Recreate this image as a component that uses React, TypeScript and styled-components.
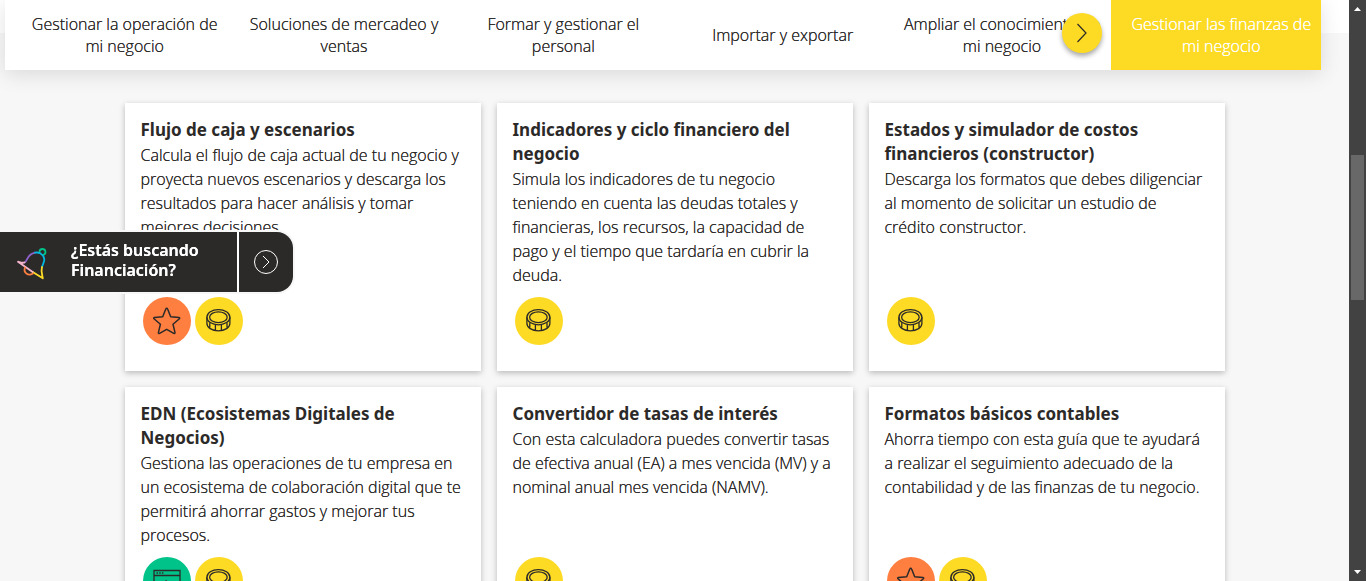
import React from 'react';
import styled, { createGlobalStyle } from 'styled-components';

const GlobalStyle = createGlobalStyle`
  *, *::before, *::after { box-sizing: border-box; }
  body {
    margin: 0;
    background: #f7f7f7;
    color: #2c2a29;
    font-family: 'Open Sans', 'Liberation Sans', sans-serif;
    font-size: 16px;
    font-weight: 300;
    overflow: hidden;
  }
  h2, p, ul { margin: 0; padding: 0; }
`;

const Page = styled.div`
  display: flex;
  height: 100vh;
`;

const Main = styled.main`
  flex: 1;
  min-width: 0;
  overflow: hidden;
  background: linear-gradient(#fff 33px, #f7f7f7 33px);
`;

const TabBar = styled.nav`
  position: relative;
  margin: 0 28px 0 5px;
  background: #fff;
  box-shadow: 0 4px 20px rgba(0, 0, 0, 0.12);
`;

const TabViewport = styled.div`
  overflow: hidden;
`;

const TabTrack = styled.div`
  display: grid;
  grid-template-columns: repeat(6, 1fr);
  width: 100%;
  height: 70px;
  margin-left: 9px;
`;

const Tab = styled.a<{ $active?: boolean }>`
  display: flex;
  align-items: center;
  justify-content: center;
  padding: 0 9px 0 11px;
  background: ${p => (p.$active ? '#fdda24' : 'transparent')};
  color: ${p => (p.$active ? '#fff' : '#2c2a29')};
  line-height: 22px;
  text-align: center;
  text-decoration: none;
  text-shadow: 0 0 0 currentColor;
`;

const NextButton = styled.button`
  position: absolute;
  top: 13px;
  right: 219px;
  display: grid;
  place-items: center;
  width: 40px;
  height: 40px;
  padding: 0;
  border: 0;
  border-radius: 50%;
  background: #fdda24;
  box-shadow: 0 3px 5px rgba(0, 0, 0, 0.35);
`;

const CardGrid = styled.div`
  display: grid;
  grid-template-columns: repeat(3, 1fr);
  gap: 16px;
  max-width: 1100px;
  margin: 33px auto 0;
`;

const Card = styled.article`
  display: flex;
  flex-direction: column;
  padding: 15px 16px 26px;
  background: #fff;
  box-shadow: 0 2px 6px rgba(0, 0, 0, 0.25);
`;

const CardTitle = styled.h2`
  margin-bottom: 1px;
  font-family: 'Noto Sans', 'Open Sans', sans-serif;
  font-size: 17px;
  font-weight: 700;
  line-height: 24px;
`;

const CardText = styled.p`
  line-height: 24px;
  text-shadow: 0 0 0 currentColor;
`;

const Badges = styled.ul`
  display: flex;
  gap: 4px;
  margin-top: auto;
  padding: 10px 2px 0;
  list-style: none;
`;

const badgeColors = { star: '#ff7f41', coin: '#fdda24', web: '#00c389' };
type BadgeKind = keyof typeof badgeColors;

const Badge = styled.li<{ $kind: BadgeKind }>`
  display: grid;
  place-items: center;
  width: 48px;
  height: 48px;
  border-radius: 50%;
  background: ${p => badgeColors[p.$kind]};
`;

const FloatingOffer = styled.aside`
  position: fixed;
  top: 232px;
  left: 0;
  display: flex;
  height: 60px;
  border-radius: 0 16px 16px 0;
  background: #2c2a29;
  box-shadow: 0 0 0 2px #f7f7f7;
`;

const OfferLink = styled.a`
  display: flex;
  align-items: center;
  gap: 22px;
  width: 239px;
  padding-left: 16px;
  border-right: 2px solid #fff;
  color: #fff;
  font-family: 'Noto Sans', 'Open Sans', sans-serif;
  font-size: 16px;
  font-weight: 600;
  line-height: 20px;
  text-decoration: none;
  text-shadow: 0 0 0 currentColor;
`;

const OfferText = styled.span`
  padding-bottom: 4px;
`;

const OfferToggle = styled.button`
  display: grid;
  place-items: center;
  width: 54px;
  padding: 0;
  border: 0;
  background: transparent;
`;

const ScrollRail = styled.div`
  display: flex;
  flex-direction: column;
  align-items: center;
  justify-content: space-between;
  width: 17px;
  padding: 7px 0;
  background: #424242;
`;

const ScrollThumb = styled.div`
  width: 13px;
  height: 145px;
  margin: 144px 0 auto;
  background: #686868;
`;

const StarIcon = () => (
  <svg width="28" height="28" viewBox="0 0 28 28" fill="none" stroke="#2c2a29" strokeWidth="1.5" strokeLinejoin="round" aria-hidden="true">
    <path d="M13.700 1.200Q14.300 1.200 14.600 2L17.700 9.700L26 10.400Q27.200 10.800 26.400 11.700L20 17.300L22 25.600Q22 27 20.800 26.400L13.700 22.300L6.600 26.400Q5.400 27 5.400 25.600L7.400 17.300L1 11.700Q.2 10.800 1.400 10.400L9.700 9.700L12.800 2Q13.100 1.200 13.700 1.200z" />
  </svg>
);

const CoinIcon = () => (
  <svg width="28" height="28" viewBox="0 0 28 28" fill="none" stroke="#2c2a29" strokeWidth="1.3" aria-hidden="true">
    <ellipse cx="13.400" cy="10.200" rx="11.500" ry="7.600" />
    <ellipse cx="13.400" cy="10.200" rx="8.800" ry="5.400" />
    <path d="M1.900 10.200v6c0 4.400 5 7.600 11.500 7.600s11.500-3.200 11.500-7.600v-6M4.800 15.500v5M10.400 18v5.500M16.400 18v5.500M22 15.500v5" />
  </svg>
);

const WebIcon = () => (
  <svg width="28" height="28" viewBox="0 0 28 28" fill="none" stroke="#2c2a29" strokeWidth="1.3" aria-hidden="true">
    <path d="M1 3.500h26v21H1zM1 8.500h26M9 17l4-3v6z" />
    <path d="M3.500 6h7" strokeDasharray="1.500 1.200" />
  </svg>
);

const BellIcon = () => (
  <svg width="33" height="35" viewBox="0 0 33 35" fill="none" strokeWidth="1.8" strokeLinecap="round" strokeLinejoin="round" aria-hidden="true">
    <path d="M23.500 6.500A3 3 0 1 1 27.500 9.800" stroke="#00c389" />
    <path d="M8.500 17.500C12 16 10.500 9.500 19 7.700" stroke="#9063cd" />
    <path d="M19 7.700C25 6.500 30.500 12 27.300 18.500L26 22" stroke="#01b8e3" />
    <path d="M26 22C24.800 26 26 29 26.800 33.300L16.700 27" stroke="#fdda24" />
    <path d="M16.700 27L2 16.700C4 17.200 6 18.300 8.500 17.500" stroke="#f5b6cd" />
    <path d="M9 22.500C7 27.500 12 31.500 17 28.500" stroke="#ff7f41" />
  </svg>
);

const icons: Record<BadgeKind, { label: string; Icon: () => React.JSX.Element }> = {
  star: { label: 'Destacado', Icon: StarIcon },
  coin: { label: 'Finanzas', Icon: CoinIcon },
  web: { label: 'Herramienta web', Icon: WebIcon },
};

const tabs = [
  'Gestionar la operación de mi negocio',
  'Soluciones de mercadeo y ventas',
  'Formar y gestionar el personal',
  'Importar y exportar',
  'Ampliar el conocimiento de mi negocio',
  'Gestionar las finanzas de mi negocio',
];

const cards: { title: string; text: string; badges: BadgeKind[] }[] = [
  {
    title: 'Flujo de caja y escenarios',
    text: 'Calcula el flujo de caja actual de tu negocio y proyecta nuevos escenarios y descarga los resultados para hacer análisis y tomar mejores decisiones.',
    badges: ['star', 'coin'],
  },
  {
    title: 'Indicadores y ciclo financiero del negocio',
    text: 'Simula los indicadores de tu negocio teniendo en cuenta las deudas totales y financieras, los recursos, la capacidad de pago y el tiempo que tardaría en cubrir la deuda.',
    badges: ['coin'],
  },
  {
    title: 'Estados y simulador de costos financieros (constructor)',
    text: 'Descarga los formatos que debes diligenciar al momento de solicitar un estudio de crédito constructor.',
    badges: ['coin'],
  },
  {
    title: 'EDN (Ecosistemas Digitales de Negocios)',
    text: 'Gestiona las operaciones de tu empresa en un ecosistema de colaboración digital que te permitirá ahorrar gastos y mejorar tus procesos.',
    badges: ['web', 'coin'],
  },
  {
    title: 'Convertidor de tasas de interés',
    text: 'Con esta calculadora puedes convertir tasas de efectiva anual (EA) a mes vencida (MV) y a nominal anual mes vencida (NAMV).',
    badges: ['coin'],
  },
  {
    title: 'Formatos básicos contables',
    text: 'Ahorra tiempo con esta guía que te ayudará a realizar el seguimiento adecuado de la contabilidad y de las finanzas de tu negocio.',
    badges: ['star', 'coin'],
  },
];

export default function App() {
  return (
    <Page>
      <GlobalStyle />
      <Main>
        <TabBar>
          <TabViewport>
            <TabTrack>
              {tabs.map((label, i) => (
                <Tab key={label} href="#" $active={i === tabs.length - 1}>{label}</Tab>
              ))}
            </TabTrack>
          </TabViewport>
          <NextButton aria-label="Siguiente">
            <svg width="12" height="20" viewBox="0 0 12 20" fill="none" stroke="#2c2a29" strokeWidth="1.2" aria-hidden="true">
              <path d="M1.500 1l8.500 9-8.500 9" />
            </svg>
          </NextButton>
        </TabBar>
        <CardGrid>
          {cards.map(card => (
            <Card key={card.title}>
              <CardTitle>{card.title}</CardTitle>
              <CardText>{card.text}</CardText>
              <Badges>
                {card.badges.map(kind => {
                  const { label, Icon } = icons[kind];
                  return <Badge key={kind} $kind={kind} title={label}><Icon /></Badge>;
                })}
              </Badges>
            </Card>
          ))}
        </CardGrid>
      </Main>
      <ScrollRail aria-hidden="true">
        <svg width="7" height="4" viewBox="0 0 7 4" fill="#fff"><path d="M0 4l3.500-4L7 4z" /></svg>
        <ScrollThumb />
        <svg width="7" height="4" viewBox="0 0 7 4" fill="#fff"><path d="M0 0l3.500 4L7 0z" /></svg>
      </ScrollRail>
      <FloatingOffer>
        <OfferLink href="#">
          <BellIcon />
          <OfferText>¿Estás buscando<br />Financiación?</OfferText>
        </OfferLink>
        <OfferToggle aria-label="Abrir">
          <svg width="26" height="26" viewBox="0 0 26 26" fill="none" stroke="#fff" strokeWidth="1" aria-hidden="true">
            <circle cx="13" cy="13" r="11.500" />
            <path d="M10 7l6 6-6 6" />
          </svg>
        </OfferToggle>
      </FloatingOffer>
    </Page>
  );
}
